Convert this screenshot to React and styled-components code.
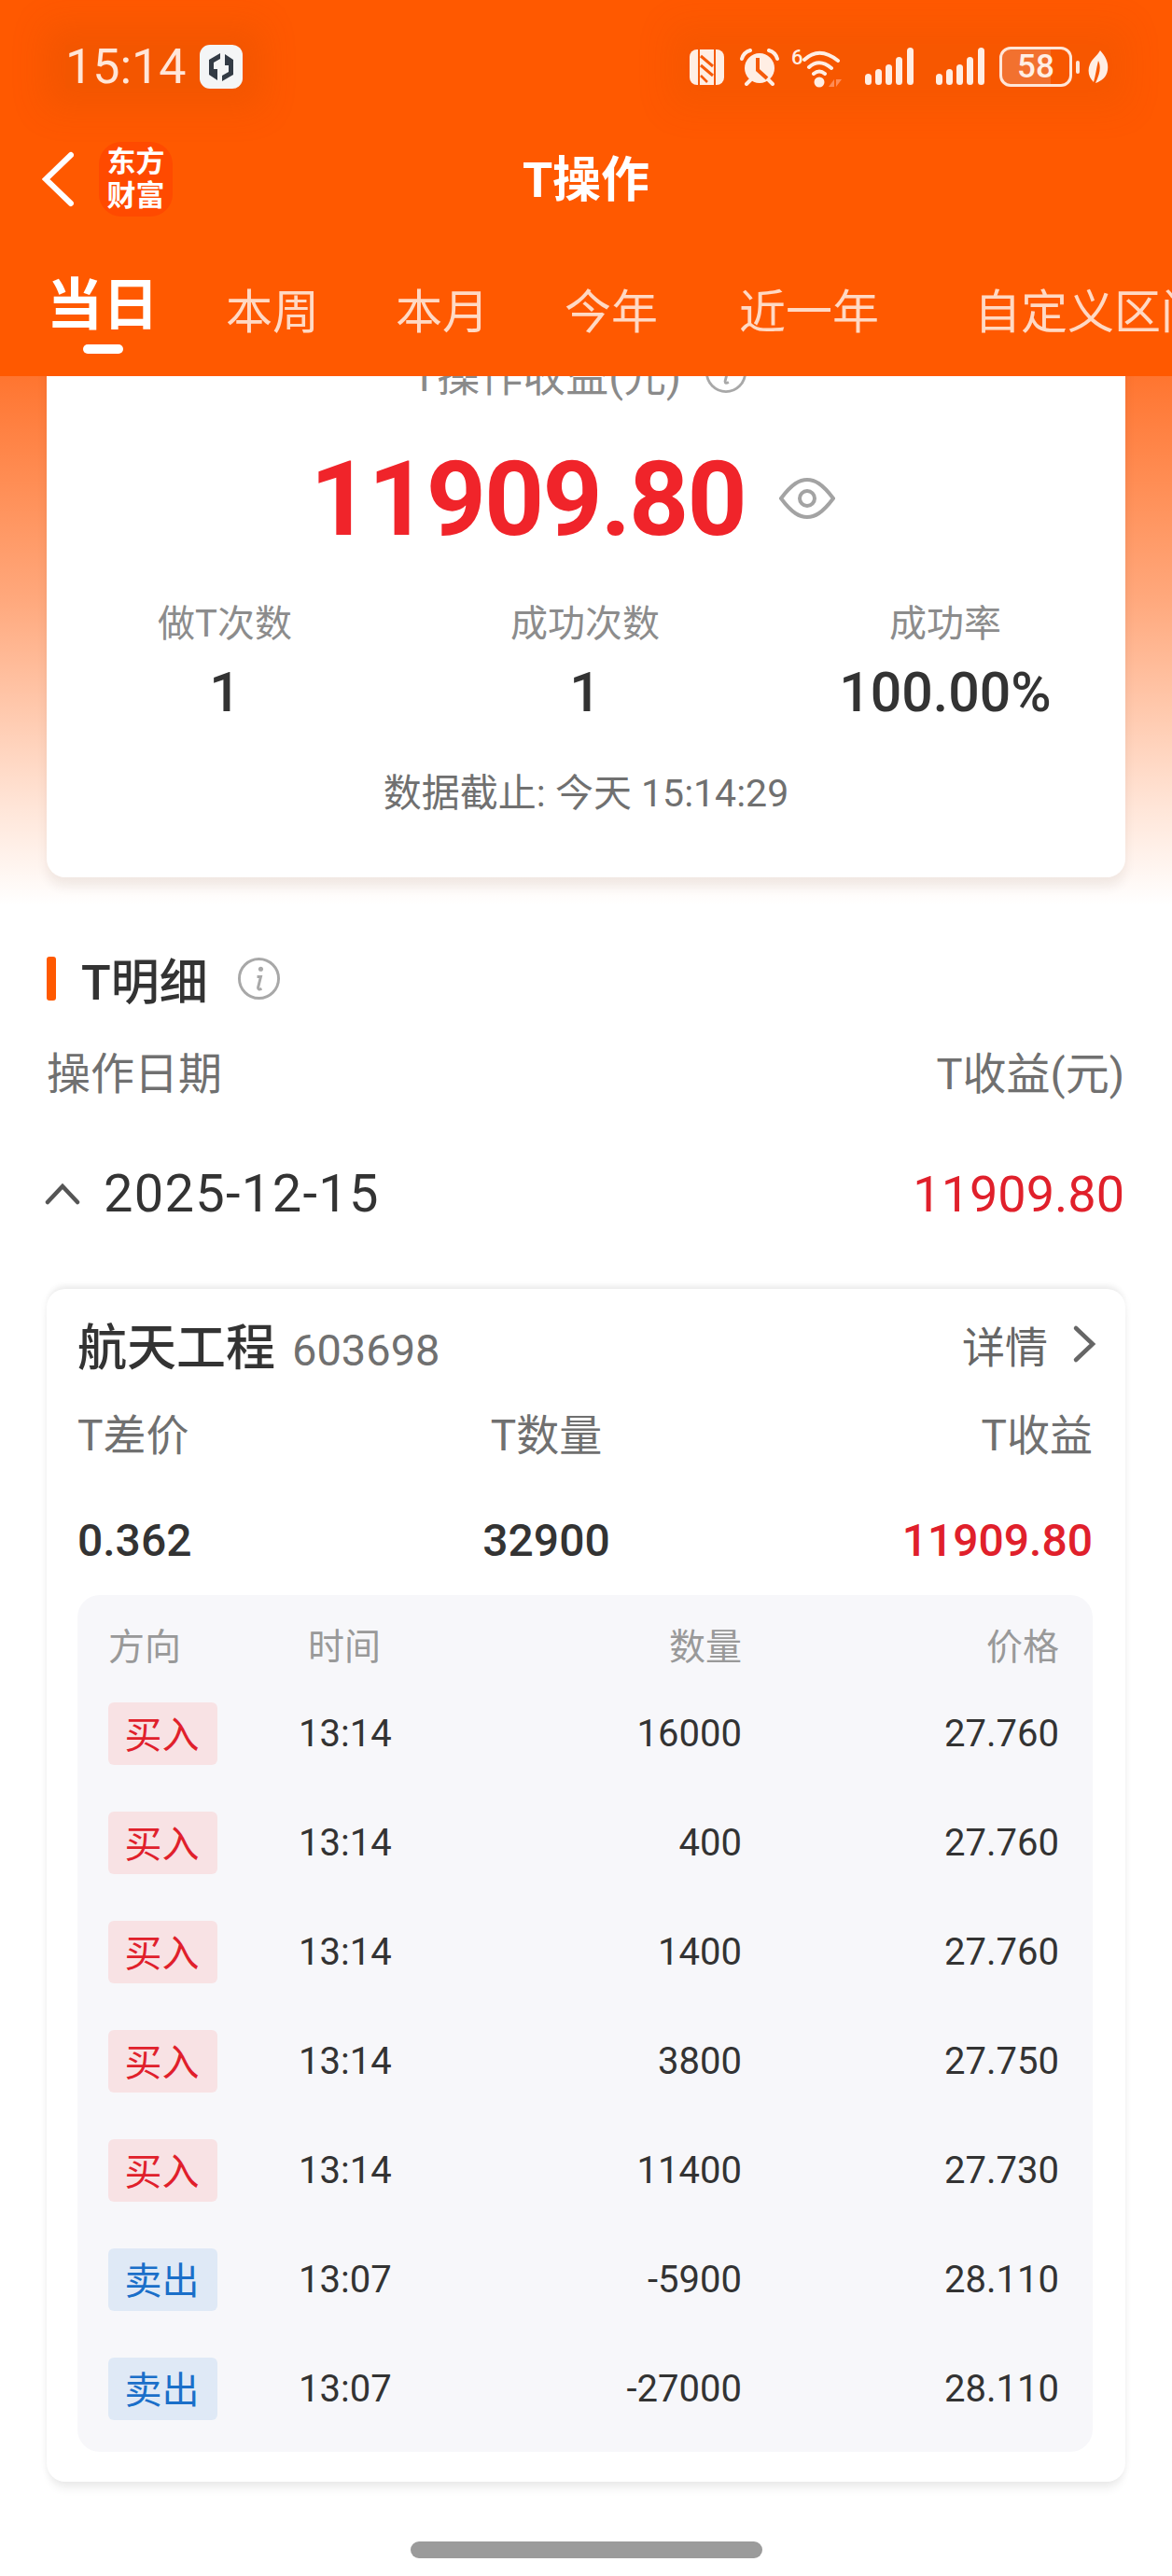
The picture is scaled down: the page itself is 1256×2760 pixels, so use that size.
import React from 'react'
import styled, { createGlobalStyle } from 'styled-components'

const FONT = `Roboto, 'Noto Sans CJK SC', sans-serif`

const GlobalStyle = createGlobalStyle`
  html, body {
    margin: 0;
    padding: 0;
    background: #fff;
  }
  * {
    box-sizing: border-box;
  }
`

const Page = styled('div')`
  position: relative;
  width: 1256px;
  height: 2760px;
  overflow: hidden;
  background: #fff;
  font-family: ${FONT};
`

const Header = styled('header')`
  position: relative;
  z-index: 2;
  height: 403px;
  background: #ff5900;
  overflow: hidden;
`

const StatusBar = styled('div')`
  display: flex;
  justify-content: space-between;
  height: 144px;
  padding: 48px 68px 0 70px;
`

const StatusLeft = styled('div')`
  display: flex;
  align-items: center;
  gap: 14px;
  height: 47px;
  background: rgba(190, 70, 0, 0.18);
  box-shadow: 0 0 36px 22px rgba(190, 70, 0, 0.18);
`

const Clock = styled('span')`
  font-size: 52px;
  line-height: 47px;
  color: #ffe6d8;
`

const AppBadge = styled('span')`
  display: flex;
  align-items: center;
  justify-content: center;
  width: 46px;
  height: 47px;
  border-radius: 11px;
  background: #f4f5f6;
`

const StatusRight = styled('div')`
  display: flex;
  align-items: center;
  height: 47px;
  background: rgba(190, 70, 0, 0.12);
  box-shadow: 0 0 36px 22px rgba(190, 70, 0, 0.12);
`

const IconSlot = styled('span')`
  display: flex;
  margin-right: ${(p) => p.$right || 0}px;
`

const Battery = styled('span')`
  display: flex;
  align-items: center;
  justify-content: center;
  width: 78px;
  height: 43px;
  border: 3px solid #ffe6d8;
  border-radius: 12px;
  background: linear-gradient(90deg, #f2712f 0 72%, transparent 72%);
  color: #ffeee4;
  font-size: 35px;
  font-weight: 500;
`

const BatteryNub = styled('span')`
  width: 4px;
  height: 14px;
  margin: 0 9px 0 4px;
  border-radius: 2px;
  background: #ffe6d8;
`

const NavBar = styled('div')`
  position: relative;
  display: flex;
  align-items: center;
  justify-content: center;
  height: 96px;
  padding-bottom: 8px;
`

const NavLeft = styled('div')`
  position: absolute;
  left: 45px;
  top: 8px;
  display: flex;
  align-items: center;
  gap: 27px;
`

const Logo = styled('div')`
  display: flex;
  align-items: center;
  justify-content: center;
  width: 79px;
  height: 80px;
  border-radius: 24px;
  background: #ff4a00;
  color: #fff;
  font-size: 31px;
  font-weight: 700;
  line-height: 36px;
  text-align: center;
`

const Title = styled('h1')`
  margin: 0;
  color: #fff;
  font-size: 52px;
  font-weight: 700;
`

const Tabs = styled('nav')`
  display: flex;
  align-items: flex-end;
  height: 93px;
  margin-top: 34px;
  padding-left: 50px;
  white-space: nowrap;
`

const Tab = styled('div')`
  position: relative;
  flex: none;
  margin-left: ${(p) => p.$gap || 0}px;
  color: ${(p) => (p.$active ? '#fff' : '#ffd9c4')};
  font-size: ${(p) => (p.$active ? 60 : 50)}px;
  font-weight: ${(p) => (p.$active ? 700 : 400)};
  line-height: ${(p) => (p.$active ? 78 : 64)}px;
`

const TabMark = styled('span')`
  position: absolute;
  left: 39px;
  bottom: -12px;
  width: 43px;
  height: 10px;
  border-radius: 5px;
  background: #fff;
`

const Hero = styled('section')`
  display: flow-root;
  height: 567px;
  padding: 0 50px;
  background: linear-gradient(180deg, #ff7530 0%, #ffa87c 42%, #ffe6d9 82%, #fff 100%);
`

const SummaryCard = styled('div')`
  height: 597px;
  margin-top: -60px;
  padding-top: 26px;
  border-radius: 20px;
  background: #fff;
  box-shadow: 0 10px 12px rgba(60, 30, 20, 0.07);
  text-align: center;
`

const EarningsLabel = styled('div')`
  display: flex;
  align-items: center;
  justify-content: center;
  gap: 25px;
  height: 60px;
  padding-right: 14px;
  color: #8a8a8a;
  font-size: 46px;
`

const BigRow = styled('div')`
  display: flex;
  align-items: center;
  justify-content: center;
  gap: 36px;
  height: 130px;
  margin-top: 40px;
  padding-right: 29px;
`

const BigValue = styled('span')`
  color: #f0242a;
  font-size: 112px;
  font-weight: 700;
  letter-spacing: -2px;
`

const Stats = styled('div')`
  display: grid;
  grid-template-columns: repeat(3, 1fr);
  margin: 45px 0 0 -2px;
`

const StatLabel = styled('div')`
  color: #8c8c8c;
  font-size: 40px;
  line-height: 50px;
`

const StatValue = styled('div')`
  margin-top: 13px;
  color: #333;
  font-size: 59px;
  font-weight: 500;
  line-height: 70px;
`

const AsOf = styled('div')`
  margin-top: 48px;
  color: #707070;
  font-size: 41px;
  line-height: 50px;
`

const SectionHead = styled('div')`
  display: flex;
  align-items: center;
  height: 60px;
  margin: 48px 50px 0;
`

const SectionBar = styled('span')`
  width: 10px;
  height: 47px;
  margin-right: 27px;
  border-radius: 3px;
  background: #ff5900;
`

const SectionTitle = styled('h2')`
  margin: 0 31px 0 0;
  color: #333;
  font-size: 52px;
  font-weight: 500;
`

const ColumnHead = styled('div')`
  display: flex;
  justify-content: space-between;
  margin: 43px 51px 0 50px;
  color: #707070;
  font-size: 47px;
  line-height: 60px;
`

const DateRow = styled('div')`
  display: flex;
  align-items: center;
  justify-content: space-between;
  height: 70px;
  margin: 63px 51px 0 48px;
  font-size: 54px;
`

const DateLeft = styled('div')`
  display: flex;
  align-items: center;
  gap: 25px;
  color: #333;
  font-size: 56px;
  letter-spacing: 1.3px;
`

const Profit = styled('span')`
  color: #e0202b;
`

const DetailCard = styled('article')`
  margin: 67px 50px 0;
  padding: 29px 35px 32px 33px;
  border-radius: 20px;
  background: #fff;
  box-shadow: 0 -7px 6px -3px rgba(0, 0, 0, 0.05), 0 11px 10px -3px rgba(0, 0, 0, 0.06), 0 0 8px rgba(0, 0, 0, 0.06);
`

const CardTitleRow = styled('div')`
  display: flex;
  align-items: center;
  justify-content: space-between;
  height: 60px;
`

const StockName = styled('div')`
  display: flex;
  align-items: baseline;
  gap: 18px;
  color: #333;
  font-size: 53px;
  font-weight: 500;
`

const StockCode = styled('span')`
  color: #707070;
  font-size: 47px;
  font-weight: 400;
`

const DetailLink = styled('div')`
  display: flex;
  align-items: center;
  gap: 26px;
  margin-right: -4px;
  color: #666;
  font-size: 46px;
`

const MetricGrid = styled('div')`
  display: grid;
  grid-template-columns: 334px 337px 1fr;
  align-items: center;
  margin-top: ${(p) => p.$top}px;
  color: ${(p) => (p.$strong ? '#333' : '#707070')};
  font-size: ${(p) => (p.$strong ? 48 : 46)}px;
  font-weight: ${(p) => (p.$strong ? 500 : 400)};
  line-height: ${(p) => (p.$strong ? 60 : 50)}px;
`

const Metric = styled('div')`
  text-align: ${(p) => p.$align || 'left'};
`

const Panel = styled('div')`
  margin-top: 28px;
  padding: 31px 36px 34px 33px;
  border-radius: 24px;
  background: #f7f7fa;
`

const TradeGrid = styled('div')`
  display: grid;
  grid-template-columns: 204px 180px 295px 340px;
  align-items: center;
  margin-top: ${(p) => p.$top}px;
`

const HeadCell = styled('div')`
  padding-left: ${(p) => p.$indent || 0}px;
  color: #999;
  font-size: 39px;
  line-height: 50px;
  text-align: ${(p) => p.$align || 'left'};
`

const Cell = styled('div')`
  color: #333;
  font-size: 40px;
  text-align: ${(p) => p.$align || 'left'};
`

const Side = styled('div')`
  display: flex;
  align-items: center;
  justify-content: center;
  width: 117px;
  height: 67px;
  padding: 0 2px 4px 0;
  border-radius: 6px;
  background: ${(p) => (p.$sell ? '#dfe9f6' : '#f8e2e4')};
  color: ${(p) => (p.$sell ? '#1a6fc9' : '#e0202b')};
  font-size: 40px;
`

const HomeBar = styled('div')`
  width: 377px;
  height: 18px;
  margin: 64px auto 0;
  border-radius: 9px;
  background: #9b9b9b;
`

const TABS = [
  { label: '当日', active: true },
  { label: '本周', gap: 72 },
  { label: '本月', gap: 82 },
  { label: '今年', gap: 81 },
  { label: '近一年', gap: 87 },
  { label: '自定义区间', gap: 102 },
]

const TRADES = [
  { side: '买入', time: '13:14', qty: '16000', price: '27.760' },
  { side: '买入', time: '13:14', qty: '400', price: '27.760' },
  { side: '买入', time: '13:14', qty: '1400', price: '27.760' },
  { side: '买入', time: '13:14', qty: '3800', price: '27.750' },
  { side: '买入', time: '13:14', qty: '11400', price: '27.730' },
  { side: '卖出', time: '13:07', qty: '-5900', price: '28.110', sell: true },
  { side: '卖出', time: '13:07', qty: '-27000', price: '28.110', sell: true },
]

const CREAM = '#ffeee4'
const HEAD_ORANGE = '#f55a0a'

const BadgeGlyph = () => (
  <svg width="26" height="32" viewBox="0 0 26 32">
    <path fill="#333b45" d="M12 1L0 8v16l9 6V18H5v-7l7-4zM14 31l12-7V8l-9-6v12h4v7l-7 4z" />
  </svg>
)

const NfcIcon = () => (
  <svg width="37" height="38" viewBox="0 0 37 38">
    <rect width="37" height="38" rx="8" fill={CREAM} />
    <path d="M10 0v38M27 0v38" stroke={HEAD_ORANGE} strokeWidth="2" />
    <path d="M12 7l13 11M12 17l13 11" stroke={HEAD_ORANGE} strokeWidth="3" />
    <path d="M12 28l7 7" stroke={HEAD_ORANGE} strokeWidth="2.5" />
  </svg>
)

const AlarmIcon = () => (
  <svg width="44" height="40" viewBox="0 0 44 40">
    <circle cx="22" cy="21" r="16" fill={CREAM} />
    <path d="M3 11Q5 4 12 2M41 11Q39 4 32 2M8 38l6-6M36 38l-6-6" stroke={CREAM} strokeWidth="4" fill="none" strokeLinecap="round" />
    <path d="M20 10v13l10 9" stroke={HEAD_ORANGE} strokeWidth="4" fill="none" />
  </svg>
)

const WifiIcon = () => (
  <svg width="58" height="46" viewBox="0 0 58 46">
    <text x="0" y="20" fill={CREAM} fontSize="22" fontWeight="500" fontFamily="Roboto, sans-serif">6</text>
    <path d="M14 15Q30 0 50 16M19 23Q30 13 43 24M24 30Q30 25 36 30" stroke={CREAM} strokeWidth="4" fill="none" strokeLinecap="round" />
    <circle cx="30" cy="39" r="5.5" fill={CREAM} />
    <path d="M46 44V36l-6 8zM48 36v8l6-8z" fill="#ff8c55" />
  </svg>
)

const SIGNAL_BARS = [
  [0, 28, 12],
  [11, 23, 17],
  [22, 18, 22],
  [33, 10, 30],
  [45, 0, 40],
]

const SignalIcon = () => (
  <svg width="52" height="42" viewBox="0 0 52 42">
    {SIGNAL_BARS.map(([x, y, h]) => (
      <rect key={x} x={x} y={y} width="7" height={h} rx="3.5" fill={CREAM} />
    ))}
  </svg>
)

const LeafIcon = () => (
  <svg width="22" height="36" viewBox="0 0 22 36">
    <path d="M13 0C20 8 22 14 21 21 20 29 14 33 8 35 13 25 14 17 11 11 9 19 8 27 6 34 1 29-1 22 2 15 4 9 10 6 13 0z" fill={CREAM} />
  </svg>
)

const Chevron = ({ size, d, color, width }) => (
  <svg width={size[0]} height={size[1]} viewBox={`0 0 ${size[0]} ${size[1]}`}>
    <path d={d} stroke={color} strokeWidth={width} fill="none" strokeLinecap="round" strokeLinejoin="miter" />
  </svg>
)

const InfoIcon = ({ size }) => (
  <svg width={size} height={size} viewBox="0 0 48 48">
    <circle cx="24" cy="24" r="21.5" stroke="#a8a8a8" strokeWidth="3" fill="none" />
    <circle cx="26" cy="13.5" r="2.6" fill="#a8a8a8" />
    <path d="M22 22h4l-3 12q0 3 4 1" stroke="#a8a8a8" strokeWidth="3" fill="none" />
  </svg>
)

const EyeIcon = () => (
  <svg width="60" height="44" viewBox="0 0 60 44">
    <path d="M2 22C14 6 22 2 30 2S46 6 58 22C46 38 38 42 30 42S14 38 2 22Z" stroke="#a3a3a3" strokeWidth="4" fill="none" />
    <circle cx="30" cy="22" r="8" stroke="#a3a3a3" strokeWidth="4" fill="none" />
  </svg>
)

export default function App() {
  return (
    <Page>
      <GlobalStyle />
      <Header>
        <StatusBar>
          <StatusLeft>
            <Clock>15:14</Clock>
            <AppBadge><BadgeGlyph /></AppBadge>
          </StatusLeft>
          <StatusRight>
            <IconSlot $right={16}><NfcIcon /></IconSlot>
            <IconSlot $right={12}><AlarmIcon /></IconSlot>
            <IconSlot $right={21}><WifiIcon /></IconSlot>
            <IconSlot $right={24}><SignalIcon /></IconSlot>
            <IconSlot $right={16}><SignalIcon /></IconSlot>
            <Battery>58</Battery>
            <BatteryNub />
            <LeafIcon />
          </StatusRight>
        </StatusBar>
        <NavBar>
          <NavLeft>
            <Chevron size={[34, 60]} d="M31 4L4 30l27 26" color="#fff" width="6" />
            <Logo>东方<br />财富</Logo>
          </NavLeft>
          <Title>T操作</Title>
        </NavBar>
        <Tabs>
          {TABS.map((tab) => (
            <Tab key={tab.label} $gap={tab.gap} $active={tab.active}>
              {tab.label}
              {tab.active && <TabMark />}
            </Tab>
          ))}
        </Tabs>
      </Header>

      <Hero>
        <SummaryCard>
          <EarningsLabel>
            T操作收益(元)
            <InfoIcon size={46} />
          </EarningsLabel>
          <BigRow>
            <BigValue>11909.80</BigValue>
            <EyeIcon />
          </BigRow>
          <Stats>
            <div>
              <StatLabel>做T次数</StatLabel>
              <StatValue>1</StatValue>
            </div>
            <div>
              <StatLabel>成功次数</StatLabel>
              <StatValue>1</StatValue>
            </div>
            <div>
              <StatLabel>成功率</StatLabel>
              <StatValue>100.00%</StatValue>
            </div>
          </Stats>
          <AsOf>数据截止: 今天 15:14:29</AsOf>
        </SummaryCard>
      </Hero>

      <SectionHead>
        <SectionBar />
        <SectionTitle>T明细</SectionTitle>
        <InfoIcon size={47} />
      </SectionHead>
      <ColumnHead>
        <span>操作日期</span>
        <span>T收益(元)</span>
      </ColumnHead>
      <DateRow>
        <DateLeft>
          <Chevron size={[38, 24]} d="M3 21L19 4l16 17" color="#555" width="4.5" />
          <span>2025-12-15</span>
        </DateLeft>
        <Profit>11909.80</Profit>
      </DateRow>

      <DetailCard>
        <CardTitleRow>
          <StockName>
            航天工程
            <StockCode>603698</StockCode>
          </StockName>
          <DetailLink>
            详情
            <Chevron size={[26, 42]} d="M4 4l18 17L4 38" color="#666" width="4.5" />
          </DetailLink>
        </CardTitleRow>
        <MetricGrid $top={43}>
          <Metric>T差价</Metric>
          <Metric $align="center">T数量</Metric>
          <Metric $align="right">T收益</Metric>
        </MetricGrid>
        <MetricGrid $top={58} $strong>
          <Metric>0.362</Metric>
          <Metric $align="center">32900</Metric>
          <Metric $align="right"><Profit>11909.80</Profit></Metric>
        </MetricGrid>
        <Panel>
          <TradeGrid $top={0}>
            <HeadCell>方向</HeadCell>
            <HeadCell $indent={10}>时间</HeadCell>
            <HeadCell $align="right">数量</HeadCell>
            <HeadCell $align="right">价格</HeadCell>
          </TradeGrid>
          {TRADES.map((trade, index) => (
            <TradeGrid key={index} $top={index === 0 ? 34 : 50}>
              <Side $sell={trade.sell}>{trade.side}</Side>
              <Cell>{trade.time}</Cell>
              <Cell $align="right">{trade.qty}</Cell>
              <Cell $align="right">{trade.price}</Cell>
            </TradeGrid>
          ))}
        </Panel>
      </DetailCard>

      <HomeBar />
    </Page>
  )
}
